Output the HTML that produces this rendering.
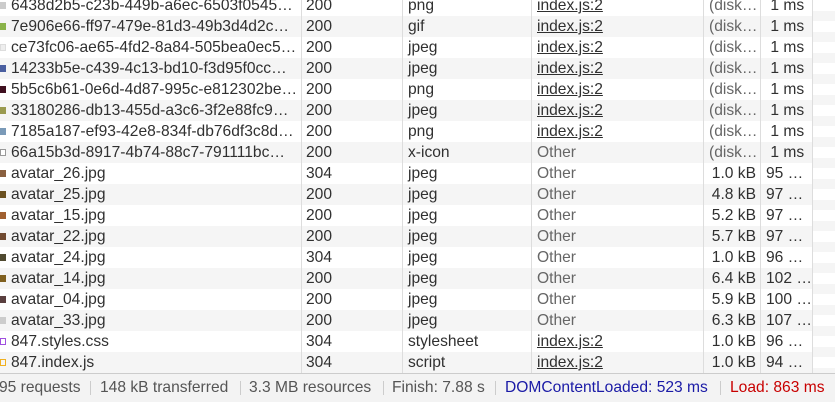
<!DOCTYPE html><html><head><style>
body{margin:0;width:835px;height:401px;overflow:hidden;background:#fff;font-family:"Liberation Sans",Arial,sans-serif;position:relative}
.r{position:absolute;left:0;width:812px;height:21px;font-size:15.6px;color:#303030;line-height:21px;white-space:nowrap}
.r.g{background:#f5f5f5}
.r span{position:absolute;top:0}
.ic{position:absolute;left:0;top:7px;width:6px;height:7px}
.n{left:11px}.s{left:306px}.t{left:408px}.i{left:537px}.z{right:56px;text-align:right}.m{left:766px}
.u{text-decoration:underline}
.dim{color:#666}
.vl{position:absolute;top:0;height:373px;width:1px;background:#ddd}
.right{position:absolute;left:813px;top:0;width:22px;height:373px;background:repeating-linear-gradient(#fff 0 11px,#f5f5f5 11px 21px)}
.bar{position:absolute;left:0;top:373px;width:835px;height:28px;background:#f3f3f3;border-top:1px solid #ccc;font-size:15.6px;color:#555;line-height:27px;white-space:nowrap}
.bar span{position:absolute;top:0}
.sep{position:absolute;top:7px;width:1px;height:14px;background:#ccc}
</style></head><body>
<div class="right"></div>
<div class="r" style="top:-5px"><i class="ic" style="background:#ccc"></i><span class="n">6438d2b5-c23b-449b-a6ec-6503f0545…</span><span class="s">200</span><span class="t">png</span><span class="i u">index.js:2</span><span class="z dim" style="left:709px;text-align:left">(disk…</span><span class="m">&nbsp;1 ms</span></div>
<div class="r g" style="top:16px"><i class="ic" style="background:#8ab34a"></i><span class="n">7e906e66-ff97-479e-81d3-49b3d4d2c…</span><span class="s">200</span><span class="t">gif</span><span class="i u">index.js:2</span><span class="z dim" style="left:709px;text-align:left">(disk…</span><span class="m">&nbsp;1 ms</span></div>
<div class="r" style="top:37px"><i class="ic" style="background:#eee;border:1px solid #ddd;width:4px;height:5px"></i><span class="n">ce73fc06-ae65-4fd2-8a84-505bea0ec5…</span><span class="s">200</span><span class="t">jpeg</span><span class="i u">index.js:2</span><span class="z dim" style="left:709px;text-align:left">(disk…</span><span class="m">&nbsp;1 ms</span></div>
<div class="r g" style="top:58px"><i class="ic" style="background:#4a5fa0"></i><span class="n">14233b5e-c439-4c13-bd10-f3d95f0cc…</span><span class="s">200</span><span class="t">jpeg</span><span class="i u">index.js:2</span><span class="z dim" style="left:709px;text-align:left">(disk…</span><span class="m">&nbsp;1 ms</span></div>
<div class="r" style="top:79px"><i class="ic" style="background:#401020"></i><span class="n">5b5c6b61-0e6d-4d87-995c-e812302be…</span><span class="s">200</span><span class="t">png</span><span class="i u">index.js:2</span><span class="z dim" style="left:709px;text-align:left">(disk…</span><span class="m">&nbsp;1 ms</span></div>
<div class="r g" style="top:100px"><i class="ic" style="background:#9a9a50"></i><span class="n">33180286-db13-455d-a3c6-3f2e88fc9…</span><span class="s">200</span><span class="t">jpeg</span><span class="i u">index.js:2</span><span class="z dim" style="left:709px;text-align:left">(disk…</span><span class="m">&nbsp;1 ms</span></div>
<div class="r" style="top:121px"><i class="ic" style="background:#7a9ab8"></i><span class="n">7185a187-ef93-42e8-834f-db76df3c8d…</span><span class="s">200</span><span class="t">png</span><span class="i u">index.js:2</span><span class="z dim" style="left:709px;text-align:left">(disk…</span><span class="m">&nbsp;1 ms</span></div>
<div class="r g" style="top:142px"><i class="ic" style="background:#fff;border:1px solid #999;width:4px;height:5px"></i><span class="n">66a15b3d-8917-4b74-88c7-791111bc…</span><span class="s">200</span><span class="t">x-icon</span><span class="i dim">Other</span><span class="z dim" style="left:709px;text-align:left">(disk…</span><span class="m">&nbsp;1 ms</span></div>
<div class="r" style="top:163px"><i class="ic" style="background:#8a6040"></i><span class="n">avatar_26.jpg</span><span class="s">304</span><span class="t">jpeg</span><span class="i dim">Other</span><span class="z">1.0 kB</span><span class="m">95 …</span></div>
<div class="r g" style="top:184px"><i class="ic" style="background:#6a5020"></i><span class="n">avatar_25.jpg</span><span class="s">200</span><span class="t">jpeg</span><span class="i dim">Other</span><span class="z">4.8 kB</span><span class="m">97 …</span></div>
<div class="r" style="top:205px"><i class="ic" style="background:#a06030"></i><span class="n">avatar_15.jpg</span><span class="s">200</span><span class="t">jpeg</span><span class="i dim">Other</span><span class="z">5.2 kB</span><span class="m">97 …</span></div>
<div class="r g" style="top:226px"><i class="ic" style="background:#704a30"></i><span class="n">avatar_22.jpg</span><span class="s">200</span><span class="t">jpeg</span><span class="i dim">Other</span><span class="z">5.7 kB</span><span class="m">97 …</span></div>
<div class="r" style="top:247px"><i class="ic" style="background:#504a30"></i><span class="n">avatar_24.jpg</span><span class="s">304</span><span class="t">jpeg</span><span class="i dim">Other</span><span class="z">1.0 kB</span><span class="m">96 …</span></div>
<div class="r g" style="top:268px"><i class="ic" style="background:#806020"></i><span class="n">avatar_14.jpg</span><span class="s">200</span><span class="t">jpeg</span><span class="i dim">Other</span><span class="z">6.4 kB</span><span class="m">102 …</span></div>
<div class="r" style="top:289px"><i class="ic" style="background:#5a4040"></i><span class="n">avatar_04.jpg</span><span class="s">200</span><span class="t">jpeg</span><span class="i dim">Other</span><span class="z">5.9 kB</span><span class="m">100 …</span></div>
<div class="r g" style="top:310px"><i class="ic" style="background:#ccc"></i><span class="n">avatar_33.jpg</span><span class="s">200</span><span class="t">jpeg</span><span class="i dim">Other</span><span class="z">6.3 kB</span><span class="m">107 …</span></div>
<div class="r" style="top:331px"><i class="ic" style="border:1px solid #a050e0;width:4px;height:5px"></i><span class="n">847.styles.css</span><span class="s">304</span><span class="t">stylesheet</span><span class="i u">index.js:2</span><span class="z">1.0 kB</span><span class="m">96 …</span></div>
<div class="r g" style="top:352px"><i class="ic" style="border:1px solid #f0b020;width:4px;height:5px"></i><span class="n">847.index.js</span><span class="s">304</span><span class="t">script</span><span class="i u">index.js:2</span><span class="z">1.0 kB</span><span class="m">94 …</span></div>
<div class="vl" style="left:301px"></div><div class="vl" style="left:402px"></div><div class="vl" style="left:531px"></div><div class="vl" style="left:703px"></div><div class="vl" style="left:760px"></div><div class="vl" style="left:812px"></div>
<div class="bar">
<span style="left:-1px">95 requests</span><i class="sep" style="left:90px"></i>
<span style="left:100px">148 kB transferred</span><i class="sep" style="left:240px"></i>
<span style="left:249px">3.3 MB resources</span><i class="sep" style="left:383px"></i>
<span style="left:392px">Finish: 7.88 s</span><i class="sep" style="left:495px"></i>
<span style="left:505px;color:#1a1aa6">DOMContentLoaded: 523 ms</span><i class="sep" style="left:720px"></i>
<span style="left:730px;color:#c80000">Load: 863 ms</span>
</div>
</body></html>
